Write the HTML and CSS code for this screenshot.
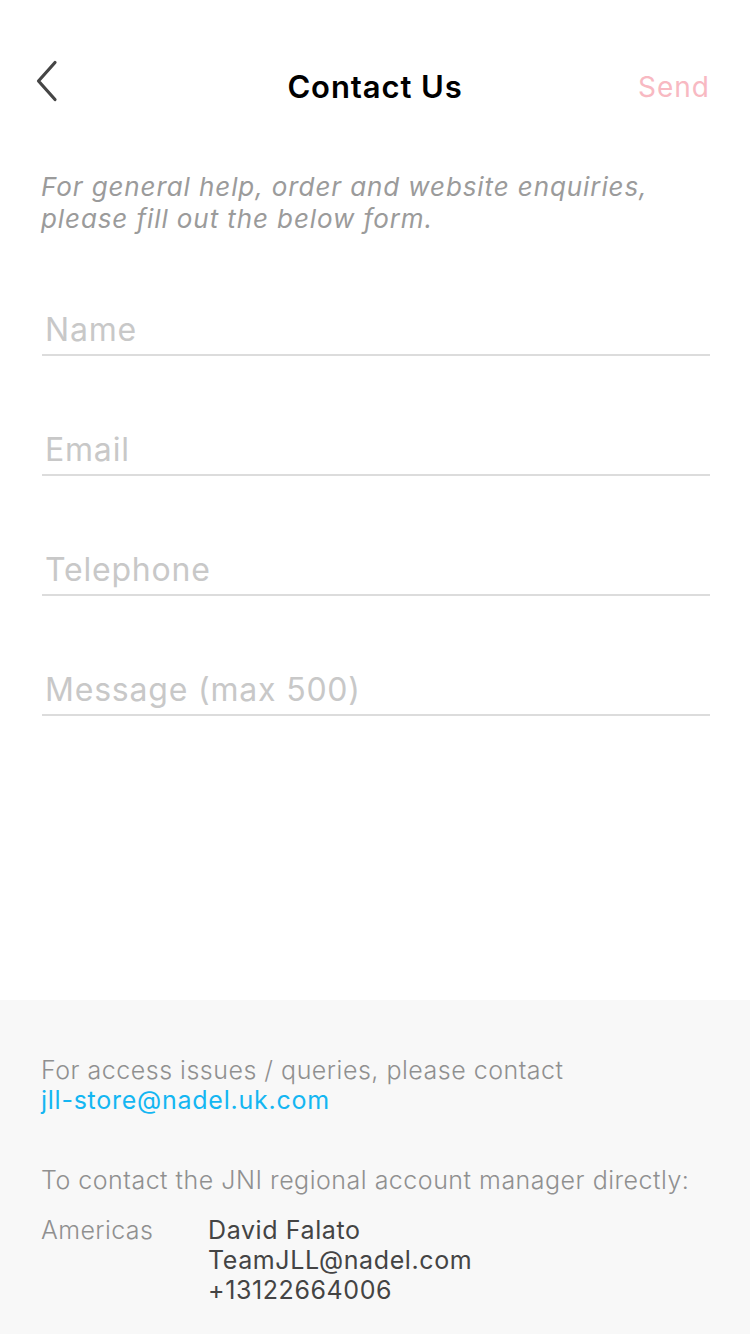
FILE: index.html
```html
<!DOCTYPE html>
<html>
<head>
<meta charset="utf-8">
<link rel="stylesheet" href="styles.css">
</head>
<body>
<div class="page">
  <header class="nav">
    <button class="back" aria-label="Back">
      <svg width="24" height="42" viewBox="0 0 24 42"><path d="M20 2.5 L3.5 21 L20 39.5" fill="none" stroke="#454545" stroke-width="3.2" stroke-linecap="round" stroke-linejoin="round"/></svg>
    </button>
    <h1 class="title">Contact Us</h1>
    <span class="send">Send</span>
  </header>
  <main class="main">
    <p class="intro">For general help, order and website enquiries, please fill out the below form.</p>
    <form class="form">
      <div class="field"><span class="ph">Name</span></div>
      <div class="field"><span class="ph">Email</span></div>
      <div class="field"><span class="ph">Telephone</span></div>
      <div class="field"><span class="ph">Message (max 500)</span></div>
    </form>
  </main>
  <footer class="footer">
    <p class="note">For access issues / queries, please contact<br><a class="link">jll-store@nadel.uk.com</a></p>
    <p class="note note2">To contact the JNI regional account manager directly:</p>
    <div class="region">
      <span class="region-name">Americas</span>
      <div class="region-info">
        <span>David Falato</span>
        <span>TeamJLL@nadel.com</span>
        <span>+13122664006</span>
      </div>
    </div>
  </footer>
</div>
</body>
</html>
```
FILE: styles.css
```css
* { box-sizing: border-box; }
html, body { margin: 0; padding: 0; }
body {
  width: 750px;
  height: 1334px;
  background: #fff;
  font-family: Inter, "Noto Sans", sans-serif;
  overflow: hidden;
}
.page {
  display: flex;
  flex-direction: column;
  height: 1334px;
}
.nav {
  display: flex;
  align-items: center;
  justify-content: space-between;
  height: 56px;
  margin-top: 58px;
  padding: 0 40px 0 35px;
  position: relative;
}
.back {
  background: none;
  border: 0;
  padding: 0;
  width: 24px;
  height: 42px;
  display: flex;
  margin-bottom: 10px;
}
.title {
  margin: 0;
  font-size: 31px;
  font-weight: 600;
  color: #000;
  letter-spacing: 0.9px;
  position: absolute;
  left: 0;
  right: 0;
  text-align: center;
  pointer-events: none;
}
.send {
  font-size: 28px;
  color: #f8b9c2;
  font-weight: 400;
  letter-spacing: 1px;
  margin-top: 2px;
}
.main {
  flex: 1;
  padding: 0 40px 0 41px;
}
.intro {
  margin: 57px 0 0;
  font-size: 26px;
  line-height: 32px;
  font-style: italic;
  color: #9b9b9b;
  letter-spacing: 0.9px;
}
.form {
  margin-top: 76px;
  display: flex;
  flex-direction: column;
  gap: 75px;
  padding-left: 1px;
}
.field {
  height: 45px;
  border-bottom: 2px solid #dcdcdc;
  display: flex;
  align-items: flex-start;
  padding-left: 3px;
}
.ph {
  font-size: 32px;
  line-height: 38px;
  color: #c8c8c8;
  letter-spacing: 0.8px;
}
.footer {
  height: 334px;
  background: #f8f8f8;
  padding: 55px 40px 0 41px;
}
.note {
  margin: 0;
  font-size: 25px;
  line-height: 30px;
  font-weight: 300;
  color: #909090;
  letter-spacing: 0.5px;
}
.link {
  color: #14b6f2;
  font-weight: 400;
  letter-spacing: 0.75px;
}
.note2 {
  margin-top: 50px;
}
.region {
  display: flex;
  margin-top: 20px;
}
.region-name {
  width: 167px;
  font-size: 25px;
  line-height: 30px;
  font-weight: 300;
  color: #909090;
  letter-spacing: 0.4px;
}
.region-info {
  display: flex;
  flex-direction: column;
  font-size: 25px;
  line-height: 30px;
  color: #444;
  letter-spacing: 0.6px;
}
```
